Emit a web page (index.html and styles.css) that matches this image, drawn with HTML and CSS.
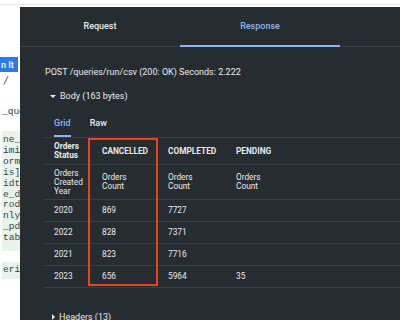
FILE: index.html
```html
<!DOCTYPE html>
<html lang="en">
<head>
    <meta charset="UTF-8">
    <meta name="viewport" content="width=device-width, initial-scale=1.0">
    <title>API Explorer - Run Query</title>
    <link rel="stylesheet" href="styles.css">
</head>
<body>
    <div class="page">
        <div class="topbar"></div>
        <div class="left">
            <button class="run-btn">n It</button>
            <div class="crumb">/</div>
            <div class="path">_que</div>
            <pre class="code">ne_
imi
orm
is]
idt
e_d
rod
nly
_pd
tab</pre>
            <pre class="code">erie</pre>
        </div>
    </div>

    <div class="drawer">
        <div class="tabs">
            <div class="tab">Request</div>
            <div class="tab active">Response</div>
        </div>

        <div class="status">POST /queries/run/csv (200: OK) Seconds: 2.222</div>

        <div class="section"><span class="caret down"></span>Body (163 bytes)</div>

        <div class="subtabs">
            <span class="subtab active">Grid</span>
            <span class="subtab">Raw</span>
        </div>

        <div class="grid">
            <table>
                <tr class="head">
                    <th class="c1">Orders<br>Status</th>
                    <th class="c2">CANCELLED</th>
                    <th class="c3">COMPLETED</th>
                    <th>PENDING</th>
                </tr>
                <tr class="sub">
                    <td>Orders<br>Created<br>Year</td>
                    <td>Orders<br>Count</td>
                    <td>Orders<br>Count</td>
                    <td>Orders<br>Count</td>
                </tr>
                <tr><td>2020</td><td>869</td><td>7727</td><td></td></tr>
                <tr><td>2022</td><td>828</td><td>7371</td><td></td></tr>
                <tr><td>2021</td><td>823</td><td>7716</td><td></td></tr>
                <tr><td>2023</td><td>656</td><td>5964</td><td>35</td></tr>
            </table>
            <div class="highlight"></div>
        </div>

        <div class="section headers"><span class="caret right"></span>Headers (13)</div>
    </div>
</body>
</html>
```

FILE: styles.css
```css
* {
    margin: 0;
    padding: 0;
    box-sizing: border-box;
    font-family: Roboto, 'Liberation Sans', sans-serif;
}

body {
    width: 400px;
    height: 320px;
    overflow: hidden;
    background-color: #fff;
    position: relative;
}

/* page behind the drawer */
.topbar {
    height: 5px;
    border-bottom: 1px solid #e6e6e6;
}

.left {
    width: 20px;
    overflow: hidden;
    padding-top: 52px;
}

.run-btn {
    display: block;
    background-color: #2c7be5;
    color: #fff;
    border: none;
    font-size: 9px;
    font-weight: 500;
    height: 15px;
    width: 18px;
    padding-left: 1px;
    text-align: left;
    white-space: nowrap;
    overflow: hidden;
}

.crumb {
    margin-top: 3px;
    padding-left: 4px;
    font-size: 10px;
    font-style: italic;
    color: #333;
    line-height: 12px;
}

.path {
    margin-top: 19px;
    padding-left: 2px;
    font-family: 'Liberation Mono', monospace;
    font-size: 9.5px;
    line-height: 11px;
    color: #333;
}

.code {
    margin: 14px 0 0 2px;
    padding: 4px 1px 7px;
    background-color: #e8f3ea;
    font-family: 'Liberation Mono', monospace;
    font-size: 9.5px;
    line-height: 10.9px;
    color: #3c4043;
}

.code + .code {
    margin-top: 11px;
    padding: 3px 1px 3px;
}

/* response drawer */
.drawer {
    position: absolute;
    left: 20px;
    top: 7px;
    right: 0;
    bottom: 0;
    background-color: #272c30;
    color: #e8eaed;
    font-size: 9px;
}

.tabs {
    display: flex;
    height: 40px;
    border-bottom: 1px solid #3a3f43;
}

.tab {
    width: 160px;
    text-align: center;
    line-height: 39px;
    font-weight: 500;
    position: relative;
}

.tab.active {
    color: #8ab4f8;
}

.tab.active::after {
    content: '';
    position: absolute;
    left: 0;
    right: 0;
    bottom: -1px;
    height: 2px;
    background-color: #8ab4f8;
}

.status {
    margin-top: 19px;
    padding-left: 25px;
    line-height: 12px;
}

.section {
    margin-top: 12px;
    padding-left: 30px;
    line-height: 12px;
    display: flex;
    align-items: center;
}

.caret {
    display: inline-block;
    width: 0;
    height: 0;
    margin-right: 4px;
}

.caret.down {
    border-left: 3px solid transparent;
    border-right: 3px solid transparent;
    border-top: 3.5px solid #e8eaed;
}

.caret.right {
    border-top: 3px solid transparent;
    border-bottom: 3px solid transparent;
    border-left: 3.5px solid #e8eaed;
    margin-left: 2px;
}

.subtabs {
    margin-top: 15px;
    padding-left: 34px;
    display: flex;
    gap: 19px;
}

.subtab {
    line-height: 12px;
    padding-bottom: 6px;
    border-bottom: 2px solid transparent;
    font-weight: 500;
}

.subtab.active {
    color: #8ab4f8;
    border-bottom-color: #8ab4f8;
}

.grid {
    position: relative;
    margin-left: 24px;
}

table {
    width: 100%;
    border-collapse: collapse;
    border-top: 1px solid #3a3f43;
    font-size: 8.3px;
}

th,
td {
    text-align: left;
    padding-left: 10px;
    border-bottom: 1px solid #3a3f43;
    vertical-align: middle;
    line-height: 9px;
}

th {
    height: 27px;
    font-weight: 700;
}

.c1 {
    width: 48px;
}

.c2 {
    width: 66px;
}

.c3 {
    width: 68px;
}

.sub td {
    height: 35px;
}

td {
    height: 22px;
}

.highlight {
    position: absolute;
    left: 44px;
    top: 1px;
    width: 70px;
    height: 148px;
    border: 2px solid #e8421e;
}

.headers {
    margin-top: 23px;
}
```
